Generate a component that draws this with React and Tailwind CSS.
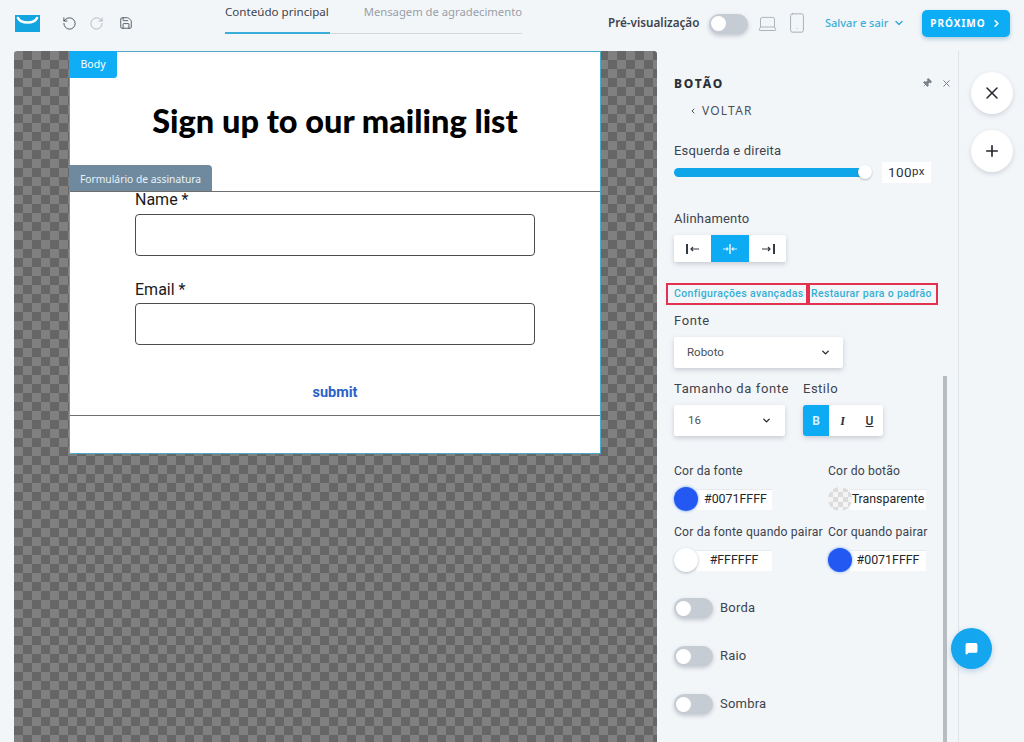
import { ChevronDown, ChevronLeft, ChevronRight, Plus, X, Pin, RotateCcw, RotateCw, Laptop, Smartphone, Save, MessageSquare } from 'lucide-react';

const uiFont = 'font-["Noto_Sans",sans-serif]';
const panelFont = 'font-["Roboto",sans-serif]';

// toggle used in the header and in the panel
function Toggle() {
  return (
    <div className="w-[39px] h-[20px] rounded-full bg-[#c6ccd3] shadow-[0_2px_4px_rgba(80,90,110,0.3)] flex items-center pl-[2px] shrink-0">
      <div className="w-[15px] h-[15px] rounded-full bg-white" />
    </div>
  );
}

function ColorField({ label, value, swatch, center, className }) {
  return (
    <div className={className}>
      <div className="text-[12.2px] leading-[16px] text-[#3d444d] tracking-[0.15px] whitespace-nowrap">{label}</div>
      <div className="flex items-center h-[24px] mt-[8px]">
        {swatch}
        <div className={`h-[21px] w-[76px] -ml-[2px] bg-white border-t border-[#e8ebee] flex items-center text-[12.4px] text-[#23272c] whitespace-nowrap ${center ? 'justify-center' : 'pl-[8px]'}`}>
          {value}
        </div>
      </div>
    </div>
  );
}

const blueDot = <div className="w-[24px] h-[24px] rounded-full bg-[#2458f2] shadow-[0_0_3px_rgba(36,120,242,0.7)] shrink-0 z-10" />;
const whiteDot = <div className="w-[24px] h-[24px] rounded-full bg-white shadow-[0_1px_3px_rgba(80,90,110,0.4)] shrink-0 z-10" />;
const transparentDot = (
  <div className="w-[24px] h-[24px] rounded-full shrink-0 z-10 bg-[conic-gradient(#dcdcdc_25%,#f4f4f4_0_50%,#dcdcdc_0_75%,#f4f4f4_0)] bg-[length:10px_10px]" />
);

function AlignIcon({ kind, color }) {
  return (
    <svg width="16" height="12" viewBox="0 0 16 12" fill="none" stroke={color} strokeWidth="1.2">
      {kind === 'left' && (
        <>
          <path d="M2 1v10" strokeWidth="2" />
          <path d="M14 6H6M8 4L6 6l2 2" />
        </>
      )}
      {kind === 'center' && (
        <>
          <path d="M8 1v10" strokeWidth="1.6" />
          <path d="M1 6h5M4.5 4.5L6 6 4.5 7.5M15 6h-5M11.5 4.5L10 6l1.5 1.5" />
        </>
      )}
      {kind === 'right' && (
        <>
          <path d="M14 1v10" strokeWidth="2" />
          <path d="M2 6h8M8 4l2 2-2 2" />
        </>
      )}
    </svg>
  );
}

function Header() {
  return (
    <div className={`h-[51px] pb-[5px] flex items-center relative shrink-0 ${uiFont}`}>
      <svg className="ml-[15px] shrink-0" width="25" height="17" viewBox="0 0 25 17">
        <rect width="25" height="17" fill="#12a5e0" />
        <path d="M3 3c3 6 16 6 19 0" fill="none" stroke="#fff" strokeWidth="2.6" strokeLinecap="round" />
      </svg>
      <RotateCcw className="ml-[22px] text-[#3d444d]" size={15} strokeWidth={1.4} />
      <RotateCw className="ml-[12px] text-[#a9b0b8]" size={15} strokeWidth={1.4} />
      <Save className="ml-[15px] text-[#3d444d]" size={14} strokeWidth={1.4} />

      <div className="ml-[92px] self-start w-[297px] h-[34px] flex border-b border-[#d5dade]">
        <div className="w-[105px] h-[34px] border-b-2 border-[#3aaed8] text-[11.6px] text-[#3d444d] pt-[3px] whitespace-nowrap">Conteúdo principal</div>
        <div className="ml-[34px] text-[11.25px] text-[#989fa7] pt-[4px] whitespace-nowrap">Mensagem de agradecimento</div>
      </div>

      <div className="ml-[86px] w-[91px] text-[11.7px] font-semibold text-[#3d444d] whitespace-nowrap">Pré-visualização</div>
      <div className="ml-[10px] mt-[1px]"><Toggle /></div>
      <Laptop className="ml-[9px] text-[#a2a9b1]" size={21} strokeWidth={1} />
      <Smartphone className="ml-[8px] text-[#a2a9b1]" size={22} strokeWidth={1} />
      <div className="ml-[17px] w-[64px] text-[11px] font-medium text-[#3aaed8] whitespace-nowrap">Salvar e sair</div>
      <ChevronDown className="ml-[4px] text-[#3aaed8]" size={12} strokeWidth={3} />
      <div className="ml-[17px] w-[88px] h-[27px] rounded-[5px] bg-[#0cadf5] shadow-[0_2px_4px_rgba(40,120,170,0.35)] flex items-center justify-center gap-[5px] text-white text-[10px] font-bold tracking-[1px]">
        PRÓXIMO <ChevronRight size={11} strokeWidth={3.5} />
      </div>
    </div>
  );
}

function Canvas() {
  return (
    <div className="ml-[14px] w-[643px] rounded-t-[3px] bg-[conic-gradient(#666666_25%,#808080_0_50%,#666666_0_75%,#808080_0)] bg-[length:18px_18px] pl-[55px] shrink-0">
      <div className="w-[532px] h-[403px] bg-white border border-[#4fa9c9] relative flex flex-col font-['Roboto',sans-serif]">
        <div className={`absolute -left-px -top-px w-[48px] h-[27px] bg-[#0fadf6] rounded-br-[3px] text-white text-[10.5px] flex items-center justify-center ${uiFont}`}>Body</div>
        <div className="h-[139px] shrink-0 pt-[49px] text-center font-['Lato',sans-serif] font-black text-[32.5px] leading-[40px] text-black whitespace-nowrap">Sign up to our mailing list</div>
        <div className="h-[225px] shrink-0 border-y border-[#6e6e6e] relative px-[65px]">
          <div className={`absolute -left-px -top-[27px] w-[143px] h-[26px] pt-[3px] bg-[#6f8a9e] rounded-tr-[4px] text-[#e9f2f7] text-[10.3px] flex items-center justify-center ${uiFont}`}>Formulário de assinatura</div>
          <div className="text-[16px] leading-[16px] text-[#1a1a1a]">Name *</div>
          <div className="h-[42px] mt-[6px] border border-[#4c4c4c] rounded-[4px]" />
          <div className="text-[16px] leading-[16px] text-[#1a1a1a] mt-[26px]">Email *</div>
          <div className="h-[42px] mt-[5px] border border-[#4c4c4c] rounded-[4px]" />
          <div className="mt-[40px] text-center text-[14.5px] leading-[16px] font-bold text-[#2b62c6]">submit</div>
        </div>
      </div>
    </div>
  );
}

function Panel() {
  return (
    <div className={`w-[302px] shrink-0 relative pl-[17px] border-r border-[#dfe3e7] ${panelFont}`}>
      {/* scrollbar */}
      <div className="absolute left-[286px] top-[325px] bottom-0 w-[4px] bg-[#b6bcc2]" />

      <div className="relative h-[41px] pt-[26px]">
        <div className={`text-[12px] leading-[14px] font-extrabold tracking-[1.8px] text-[#2c3137] ${uiFont}`}>BOTÃO</div>
        <Pin className="absolute left-[248px] top-[27px] text-[#7b838b] rotate-45" size={10} strokeWidth={2} fill="#7b838b" />
        <X className="absolute left-[267px] top-[27px] text-[#6d747c]" size={11} strokeWidth={2} />
      </div>
      <div className={`mt-[12px] ml-[15px] flex items-center gap-[5px] text-[12px] leading-[14px] tracking-[1.2px] text-[#4a5159] ${uiFont}`}>
        <ChevronLeft size={8} strokeWidth={3} /> VOLTAR
      </div>

      <div className="mt-[25px] text-[13px] leading-[16px] text-[#3d444d] tracking-[0.2px]">Esquerda e direita</div>
      <div className="mt-[2px] flex items-center h-[22px]">
        <div className="w-[197px] h-[9px] rounded-full bg-[#0ea5e9] relative">
          <div className="absolute -right-[1px] -top-[3px] w-[14px] h-[14px] rounded-full bg-white shadow-[0_1px_2px_rgba(0,0,0,0.25)]" />
        </div>
        <div className="ml-[11px] w-[49px] h-[21px] bg-white flex items-center justify-center text-[13.5px] text-[#2c3137] tracking-[0.4px]">
          100<span className="text-[11.5px]">px</span>
        </div>
      </div>

      <div className="mt-[28px] text-[13px] leading-[16px] text-[#3d444d] tracking-[0.2px]">Alinhamento</div>
      <div className="mt-[8px] w-[112px] h-[27px] bg-white rounded-[2px] shadow-[0_2px_5px_rgba(70,80,100,0.25)] flex">
        <div className="w-[37px] flex items-center justify-center"><AlignIcon kind="left" color="#333a41" /></div>
        <div className="w-[38px] bg-[#0dabf4] flex items-center justify-center"><AlignIcon kind="center" color="#d6f1ff" /></div>
        <div className="w-[37px] flex items-center justify-center"><AlignIcon kind="right" color="#333a41" /></div>
      </div>

      <div className="mt-[21px] -ml-[8px] flex h-[22px] text-[10.5px] font-medium text-[#35afd3] tracking-[0.35px]">
        <div className="w-[142px] border-2 border-[#e3324f] flex items-center pl-[6px] whitespace-nowrap">Configurações avançadas</div>
        <div className="w-[130px] border-2 border-[#e3324f] flex items-center pl-[1px] whitespace-nowrap">Restaurar para o padrão</div>
      </div>

      <div className="mt-[8px] text-[13px] leading-[16px] text-[#3d444d] tracking-[0.6px]">Fonte</div>
      <div className="mt-[8px] w-[169px] h-[31px] bg-white rounded-[2px] shadow-[0_2px_5px_rgba(70,80,100,0.25)] flex items-center justify-between pl-[13px] pr-[12px] text-[11.5px] text-[#4a5159]">
        Roboto <ChevronDown className="text-[#23272c]" size={11} strokeWidth={3} />
      </div>

      <div className="mt-[13px] flex">
        <div className="w-[129px]">
          <div className="text-[13px] leading-[16px] text-[#3d444d] tracking-[0.6px] whitespace-nowrap">Tamanho da fonte</div>
          <div className="mt-[8px] w-[111px] h-[31px] bg-white rounded-[2px] shadow-[0_2px_5px_rgba(70,80,100,0.25)] flex items-center justify-between pl-[14px] pr-[13px] text-[11.5px] text-[#4a5159]">
            16 <ChevronDown className="text-[#23272c]" size={11} strokeWidth={3} />
          </div>
        </div>
        <div>
          <div className="text-[13px] leading-[16px] text-[#3d444d] tracking-[0.5px]">Estilo</div>
          <div className="mt-[8px] w-[80px] h-[31px] bg-white rounded-[3px] shadow-[0_2px_5px_rgba(70,80,100,0.25)] flex items-center text-[12px] text-[#2c3137]">
            <div className="w-[26px] h-full bg-[#0dabf4] rounded-l-[3px] flex items-center justify-center font-bold text-[#d6f1ff]">B</div>
            <div className="w-[27px] text-center italic font-serif font-bold">I</div>
            <div className="w-[27px] text-center underline font-medium">U</div>
          </div>
        </div>
      </div>

      <div className="mt-[27px] flex">
        <ColorField className="w-[154px]" label="Cor da fonte" value="#0071FFFF" swatch={blueDot} />
        <ColorField label="Cor do botão" value="Transparente" swatch={transparentDot} center />
      </div>
      <div className="mt-[13px] flex">
        <ColorField className="w-[154px]" label="Cor da fonte quando pairar" value="#FFFFFF" swatch={whiteDot} center />
        <ColorField label="Cor quando pairar" value="#0071FFFF" swatch={blueDot} center />
      </div>

      <div className="mt-[26px] flex flex-col gap-[28px]">
        {['Borda', 'Raio', 'Sombra'].map((name) => (
          <div key={name} className="flex items-center gap-[7px] text-[13px] text-[#3d444d] tracking-[0.2px]">
            <Toggle />
            {name}
          </div>
        ))}
      </div>
    </div>
  );
}

function Rail() {
  const circle = 'w-[42px] h-[42px] rounded-full bg-white shadow-[0_2px_5px_rgba(70,80,100,0.2)] flex items-center justify-center text-[#23272c]';
  return (
    <div className="flex-1 flex flex-col items-center gap-[16px] pt-[21px]">
      <div className={circle}><X size={20} strokeWidth={1.8} /></div>
      <div className={circle}><Plus size={18} strokeWidth={2.2} /></div>
    </div>
  );
}

export default function App() {
  return (
    <div className="w-[1024px] h-[742px] overflow-hidden bg-[#f3f6f9] flex flex-col relative">
      <Header />
      <div className="flex flex-1 min-h-0">
        <Canvas />
        <Panel />
        <Rail />
      </div>
      {/* chat bubble */}
      <div className="absolute left-[951px] top-[628px] w-[41px] h-[41px] rounded-full bg-[#14a6ee] shadow-[0_2px_6px_rgba(40,120,170,0.3)] flex items-center justify-center">
        <MessageSquare size={13} strokeWidth={2} className="text-white" fill="#ffffff" />
      </div>
    </div>
  );
}
